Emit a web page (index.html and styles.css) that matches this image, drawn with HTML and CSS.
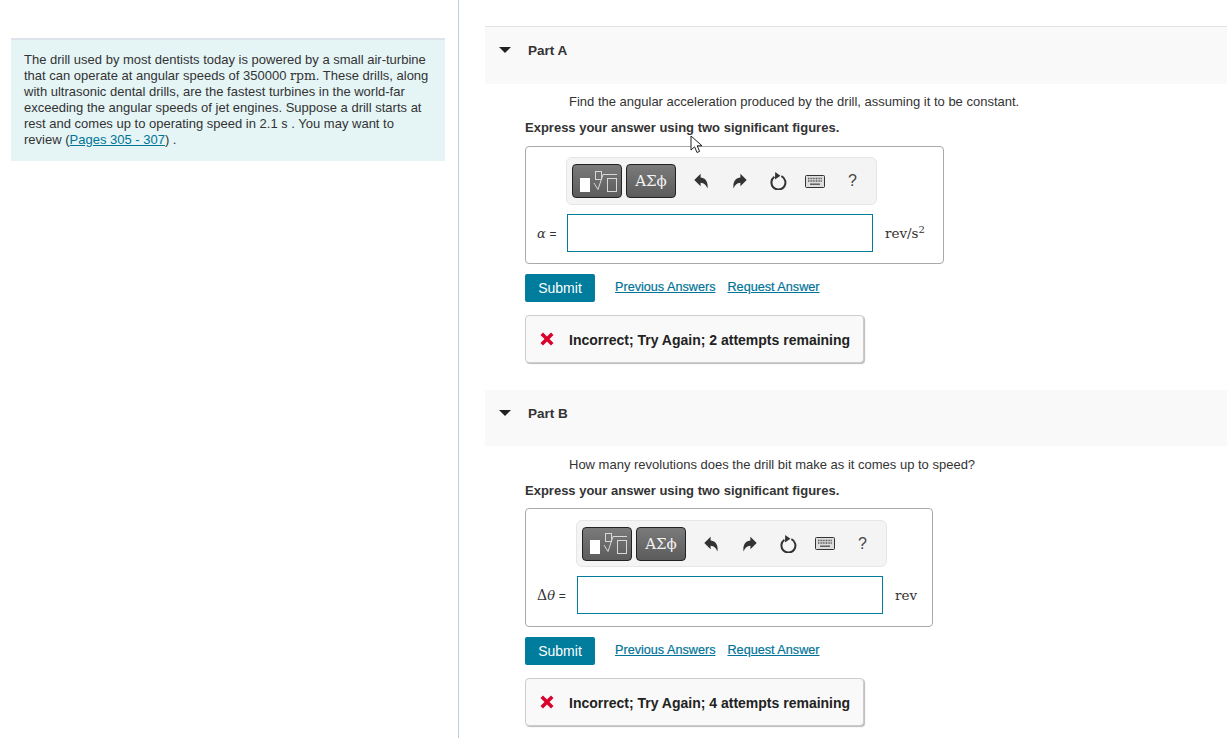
FILE: index.html
```html
<!DOCTYPE html>
<html lang="en">
<head>
<meta charset="utf-8">
<title>Part A and B</title>
<link rel="stylesheet" href="styles.css">
</head>
<body>
<svg class="defs" width="0" height="0">
  <defs>
    <symbol id="undo" viewBox="0 0 14 16"><path d="M0.3 7 6.6 0.8V4.4C11 4.6 14.6 8.4 13.4 15.6 12.2 12 10.4 10 6.6 9.8V13.2Z"/></symbol>
    <symbol id="redo" viewBox="0 0 14 16"><path d="M13.7 7 7.4 0.8V4.4C3 4.6-0.6 8.4 0.6 15.6 1.8 12 3.6 10 7.4 9.8V13.2Z"/></symbol>
    <symbol id="reset" viewBox="0 0 18 18"><path class="reset-arc" d="M5.4 4.8A7 7 0 1 0 12.4 4.2"/><path d="M6.2 0 11.4 3.8 6 7.4Z"/></symbol>
    <symbol id="kbd" viewBox="0 0 20 13"><rect class="kbd-frame" x="0.5" y="0.5" width="19" height="12" rx="1"/><path class="kbd-keys" d="M3 3.5h14M3 6h14"/><path class="kbd-bar" d="M5 9.2h10"/></symbol>
    <symbol id="matrix" viewBox="0 0 48 31"><rect class="mx-solid" x="7" y="12" width="10" height="14"/><rect class="mx-line" x="22.5" y="5.5" width="6" height="8"/><path class="mx-line" d="M21 17 25 23.5 30 8.5H44"/><rect class="mx-line" x="34.5" y="12.5" width="9" height="13"/></symbol>
    <symbol id="cross" viewBox="0 0 14 14"><path d="M3 0.5 7 4.5 11 0.5 13.5 3 9.5 7 13.5 11 11 13.5 7 9.5 3 13.5 0.5 11 4.5 7 0.5 3Z"/></symbol>
  </defs>
</svg>
<div class="page">
  <aside class="side">
    <div class="intro">The drill used by most dentists today is powered by a small air-turbine that can operate at angular speeds of 350000 <span class="math">rpm</span>. These drills, along with ultrasonic dental drills, are the fastest turbines in the world-far exceeding the angular speeds of jet engines. Suppose a drill starts at rest and comes up to operating speed in 2.1 <span class="math">s</span> . You may want to review (<a href="#">Pages 305 - 307</a>) .</div>
  </aside>
  <main class="main">
    <section class="part part-a">
      <header class="part-head"><span class="caret"></span><h2>Part A</h2></header>
      <p class="question">Find the angular acceleration produced by the drill, assuming it to be constant.</p>
      <p class="express">Express your answer using two significant figures.</p>
      <div class="answer answer-a">
        <div class="toolbar">
          <button class="tpl tpl-root" type="button"><svg class="i-matrix"><use href="#matrix"/></svg></button>
          <button class="tpl tpl-greek" type="button">ΑΣϕ</button>
          <svg class="tool t-undo"><use href="#undo"/></svg>
          <svg class="tool t-redo"><use href="#redo"/></svg>
          <svg class="tool t-reset"><use href="#reset"/></svg>
          <svg class="tool t-kbd"><use href="#kbd"/></svg>
          <span class="help">?</span>
        </div>
        <div class="entry">
          <span class="var"><i>α</i> <span class="eq">=</span></span>
          <div class="field"></div>
          <span class="unit">rev/s<sup>2</sup></span>
        </div>
      </div>
      <div class="actions">
        <button class="submit" type="button">Submit</button>
        <a class="act first" href="#">Previous Answers</a>
        <a class="act" href="#">Request Answer</a>
      </div>
      <div class="feedback"><svg class="i-cross"><use href="#cross"/></svg><span>Incorrect; Try Again; 2 attempts remaining</span></div>
    </section>
    <section class="part part-b">
      <header class="part-head"><span class="caret"></span><h2>Part B</h2></header>
      <p class="question">How many revolutions does the drill bit make as it comes up to speed?</p>
      <p class="express">Express your answer using two significant figures.</p>
      <div class="answer answer-b">
        <div class="toolbar">
          <button class="tpl tpl-root" type="button"><svg class="i-matrix"><use href="#matrix"/></svg></button>
          <button class="tpl tpl-greek" type="button">ΑΣϕ</button>
          <svg class="tool t-undo"><use href="#undo"/></svg>
          <svg class="tool t-redo"><use href="#redo"/></svg>
          <svg class="tool t-reset"><use href="#reset"/></svg>
          <svg class="tool t-kbd"><use href="#kbd"/></svg>
          <span class="help">?</span>
        </div>
        <div class="entry">
          <span class="var"><span class="delta">Δ</span><i>θ</i> <span class="eq">=</span></span>
          <div class="field"></div>
          <span class="unit">rev</span>
        </div>
      </div>
      <div class="actions">
        <button class="submit" type="button">Submit</button>
        <a class="act first" href="#">Previous Answers</a>
        <a class="act" href="#">Request Answer</a>
      </div>
      <div class="feedback"><svg class="i-cross"><use href="#cross"/></svg><span>Incorrect; Try Again; 4 attempts remaining</span></div>
    </section>
  </main>
</div>
<svg class="cursor" width="16" height="20" viewBox="0 0 16 20"><path d="M1 1V15L4.6 11.8 7 17.5 9.6 16.4 7.2 10.8H12Z"/></svg>
</body>
</html>
```
FILE: styles.css
```css
* { box-sizing: border-box; }
html, body { margin: 0; height: 738px; overflow: hidden; background: #fff; }
body { font-family: "Liberation Sans", Arial, sans-serif; color: #333; font-size: 12px; position: relative; }
.defs { position: absolute; }
.page { display: flex; height: 738px; }

.side { width: 459px; flex: none; border-right: 1px solid #b9cde3; padding: 38px 13px 0 11px; }
.intro { background: #e5f5f6; border-top: 2px solid #dde3ea; padding: 12px 13px 13px; height: 123px; font-size: 13px; line-height: 16px; color: #333; }
.intro a { color: #007398; }
.math { font-family: "DejaVu Serif", "Liberation Serif", serif; font-size: 12.5px; }

.main { flex: 1; padding: 26px 0 0 26px; min-width: 0; }
.part-b { margin-top: 27px; }
.part-head { background: #f9f9f9; height: 58px; border-top: 1px solid #e2e2e2; display: flex; align-items: flex-start; padding: 16px 0 0 14px; }
.part-b .part-head { height: 56px; border-top: 0; padding-top: 16px; }
.caret { width: 0; height: 0; border-left: 6px solid transparent; border-right: 6px solid transparent; border-top: 6px solid #222; margin: 4px 17px 0 0; }
.part-head h2 { margin: 0; font-size: 13.5px; line-height: 16px; font-weight: bold; color: #333; }
.question { margin: 10px 0 0 84px; font-size: 13px; line-height: 16px; color: #333; }
.express { margin: 10px 0 0 40px; font-size: 13px; line-height: 16px; font-weight: bold; color: #333; }
.part-b .question { margin-top: 11px; }

.answer { margin: 10px 0 0 40px; height: 118px; border: 1px solid #aaa; border-radius: 4px; padding: 10px 0 0 40px; }
.answer-a { width: 419px; }
.answer-b { width: 408px; height: 119px; margin-top: 9px; padding: 11px 0 0 50px; }
.toolbar { width: 311px; height: 48px; background: #f4f4f4; border: 1px solid #e6e6e6; border-radius: 6px; display: flex; align-items: center; padding: 0 0 0 5px; position: relative; }
.answer-b .toolbar { height: 47px; }
.tpl { height: 34px; padding: 0; border: 1px solid #222; border-radius: 4px; background: linear-gradient(#7a7a7a, #5c5c5c); color: #fff; display: flex; align-items: center; justify-content: center; }
.tpl-root { width: 50px; }
.tpl-greek { width: 50px; margin-left: 4px; font-family: "DejaVu Serif", "Liberation Serif", serif; font-size: 15px; font-weight: normal; color: #f2f2f2; }
.i-matrix { width: 48px; height: 31px; }
.mx-solid { fill: #fff; }
.mx-line { fill: none; stroke: #d8d8d8; stroke-width: 1; }
.tool { flex: none; fill: #333; }
.t-undo { width: 14px; height: 16px; margin-left: 18px; }
.t-redo { width: 14px; height: 16px; margin-left: 25px; }
.t-reset { width: 18px; height: 18px; margin-left: 22px; }
.reset-arc { fill: none; stroke: #333; stroke-width: 2; }
.t-kbd { width: 20px; height: 13px; margin-left: 18px; }
.kbd-frame { fill: #ddd; stroke: #333; stroke-width: 1; }
.kbd-keys { fill: none; stroke: #555; stroke-width: 1.4; stroke-dasharray: 1 .6; }
.kbd-bar { fill: none; stroke: #555; stroke-width: 1.4; }
.help { margin-left: 23px; font-size: 16px; color: #444; font-family: "Liberation Sans", sans-serif; }

.entry { display: flex; align-items: center; margin-top: 9px; margin-left: -40px; height: 38px; }
.answer-b .entry { margin-left: -50px; }
.var { width: 41px; padding-left: 11px; font-family: "DejaVu Serif", "Liberation Serif", serif; font-size: 12px; white-space: nowrap; color: #333; }
.answer-b .var { width: 51px; }
.var i { font-family: "DejaVu Serif", serif; font-size: 13px; }
.delta { font-size: 14px; }
.eq { font-family: "Liberation Sans", sans-serif; font-size: 12px; }
.field { width: 306px; height: 38px; border: 1px solid #007c9c; background: #fff; flex: none; }
.unit { margin-left: 12px; font-family: "DejaVu Serif", "Liberation Serif", serif; font-size: 13.5px; color: #333; }
.unit sup { font-size: 10px; line-height: 0; }

.actions { display: flex; align-items: flex-start; margin: 10px 0 0 40px; height: 28px; }
.submit { width: 70px; height: 28px; border: 0; border-radius: 2px; background: #007c9c; color: #fff; font-family: "Liberation Sans", sans-serif; font-size: 14px; padding: 0; }
.act { color: #007398; font-size: 12.65px; font-weight: normal; -webkit-text-stroke: 0.2px #007398; line-height: 26px; }
.act.first { margin-left: 20px; margin-right: 12px; }

.feedback { width: 339px; height: 48px; margin: 13px 0 0 40px; display: flex; align-items: center; padding: 2px 0 0 14px; background: #f9f9f9; border: 1px solid #ccc; border-radius: 4px; box-shadow: 1px 1px 1px #bbb; font-size: 14px; font-weight: bold; color: #222; }
.i-cross { width: 14px; height: 14px; fill: #d9002c; margin: -2px 15px 0 0; flex: none; }

.cursor { position: absolute; left: 690px; top: 135px; fill: #fff; stroke: #222; stroke-width: 1; }
```
